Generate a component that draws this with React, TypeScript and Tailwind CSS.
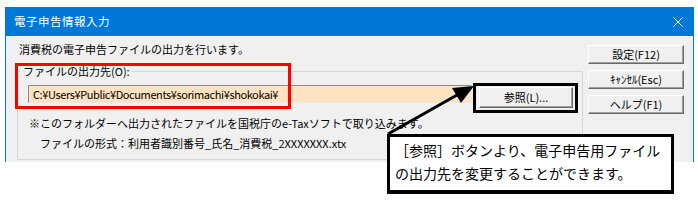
import React from "react";

const FONT = { fontFamily: '"Noto Sans CJK JP", "Noto Sans", sans-serif' };

// Classic Windows push button
function WinButton({ label, className = "" }: { label: string; className?: string }) {
  return (
    <div
      className={`flex items-center justify-center bg-[#f0f0f0] border border-t-white border-l-white border-r-[#696969] border-b-[#696969] shadow-[inset_-1px_-1px_0_#a0a0a0] text-[11px] leading-none text-black ${className}`}
    >
      {label}
    </div>
  );
}

export default function App() {
  return (
    <div className="relative w-[698px] h-[206px] bg-white overflow-hidden pt-[7px] pl-[5px]" style={FONT}>
      {/* Dialog window */}
      <div className="w-[689px] h-[155px] border-x border-[#0078d7] flex flex-col">
        {/* Title bar */}
        <div className="h-[29px] bg-[#0078d7] flex items-center justify-between pl-[8px] pr-[9px] shrink-0">
          <span className="text-[11.5px] text-white tracking-[0.5px]">電子申告情報入力</span>
          <svg width="10" height="10" viewBox="0 0 10 10" className="mr-[1px]">
            <path d="M0.5 0.5 L9.5 9.5 M9.5 0.5 L0.5 9.5" stroke="#fff" strokeWidth="1" />
          </svg>
        </div>

        {/* Body */}
        <div className="flex-1 bg-[#f0f0f0] flex">
          <div className="flex flex-col pt-[6px] pl-[11px]">
            <p className="ml-[2px] h-[15px] leading-[15px] text-[11px] text-black">
              消費税の電子申告ファイルの出力を行います。
            </p>

            <fieldset className="mt-[7px] w-[566px] h-[96px] border border-[#d5d5d5] pl-[10px]">
              <legend className="ml-[-8px] pl-[3px] pr-[2px] text-[11px] leading-[14px] text-black">
                ファイルの出力先(O):
              </legend>

              <div className="flex items-start gap-[7px] mt-[7px]">
                <div className="w-[444px] h-[18px] bg-[#ffe3c3] border border-t-[#8a8a8a] border-l-[#8a8a8a] border-b-[#e8e8e8] border-r-[#e8e8e8] flex items-center pl-[4px]">
                  <span className="text-[11px] tracking-[-0.4px] leading-none text-black">
                    C:¥Users¥Public¥Documents¥sorimachi¥shokokai¥
                  </span>
                </div>
                <WinButton label="参照(L)..." className="w-[94px] h-[21px] mt-[2px]" />
              </div>

              <p className="ml-[1px] mt-[8px] h-[15px] leading-[15px] text-[11px] text-black">
                ※このフォルダーへ出力されたファイルを国税庁のe-Taxソフトで取り込みます。
              </p>
              <p className="ml-[12px] mt-[5px] h-[15px] leading-[15px] text-[11px] text-black">
                ファイルの形式：利用者識別番号_氏名_消費税_2XXXXXXX.xtx
              </p>
            </fieldset>
          </div>

          {/* Right-hand buttons */}
          <div className="flex flex-col gap-[6px] pt-[9px] ml-[5px]">
            <WinButton label="設定(F12)" className="w-[96px] h-[19px]" />
            <WinButton label="ｷｬﾝｾﾙ(Esc)" className="w-[96px] h-[19px]" />
            <WinButton label="ヘルプ(F1)" className="w-[96px] h-[19px]" />
          </div>
        </div>
      </div>

      {/* Annotations */}
      <div className="absolute left-[15px] top-[63px] w-[276px] h-[46px] border-[3px] border-[#ff0000]" />
      <div className="absolute left-[473px] top-[83px] w-[105px] h-[30px] border-[3px] border-black" />

      <svg className="absolute left-[380px] top-[80px]" width="100" height="60" viewBox="0 0 100 60">
        <path d="M8 54 L77 15" stroke="#000" strokeWidth="3" />
        <polygon points="94,6 81,23 72,8" fill="#000" />
      </svg>

      <div className="absolute left-[387px] top-[134px] w-[287px] h-[60px] bg-white border-[3px] border-b-[4px] border-black pl-[5px] pt-[2px]">
        <p className="text-[14px] leading-[23px] text-black whitespace-nowrap">［参照］ボタンより、電子申告用ファイル</p>
        <p className="text-[14px] leading-[23px] text-black whitespace-nowrap">の出力先を変更することができます。</p>
      </div>
    </div>
  );
}
